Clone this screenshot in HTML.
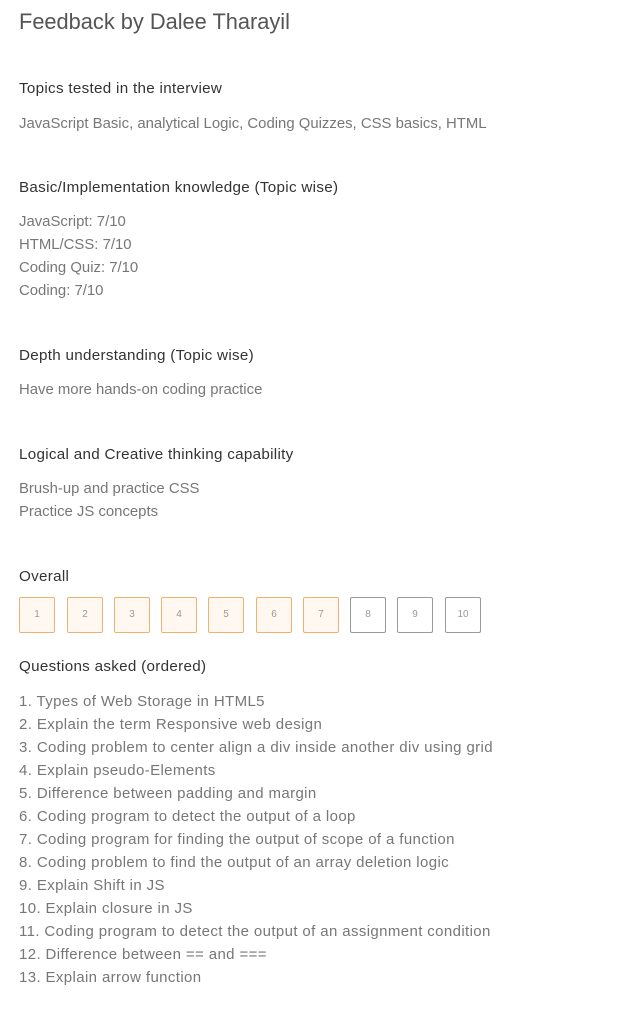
<!DOCTYPE html>
<html><head><meta charset="utf-8"><style>
body{margin:0;width:628px;height:1027px;background:#fff;font-family:"Liberation Sans",sans-serif;position:relative;overflow:hidden}
div{position:absolute;left:19px;white-space:nowrap}
.t{font-size:21.8px;color:#555;top:9px}
.h{font-size:15.2px;color:#333;letter-spacing:0.3px}
.v{font-size:14.9px;color:#777;line-height:23px}
.q{font-size:15px;letter-spacing:0.38px}
.b{width:34px;height:34px;border:1px solid #999;border-radius:2px;font-size:10px;color:#999;text-align:center;line-height:34px;top:597px}
.o{border-color:#f0b070;background:#fff8f0}
</style></head><body>
<div class="t">Feedback by Dalee Tharayil</div>
<div class="h" style="top:80px">Topics tested in the interview</div>
<div class="v" style="top:113px">JavaScript Basic, analytical Logic, Coding Quizzes, CSS basics, HTML</div>
<div class="h" style="top:179px">Basic/Implementation knowledge (Topic wise)</div>
<div class="v" style="top:211px">JavaScript: 7/10<br>HTML/CSS: 7/10<br>Coding Quiz: 7/10<br>Coding: 7/10</div>
<div class="h" style="top:347px">Depth understanding (Topic wise)</div>
<div class="v" style="top:379px">Have more hands-on coding practice</div>
<div class="h" style="top:446px">Logical and Creative thinking capability</div>
<div class="v" style="top:478px">Brush-up and practice CSS<br>Practice JS concepts</div>
<div class="h" style="top:568px">Overall</div>
<div class="b o" style="left:19px">1</div>
<div class="b o" style="left:67px">2</div>
<div class="b o" style="left:114px">3</div>
<div class="b o" style="left:161px">4</div>
<div class="b o" style="left:208px">5</div>
<div class="b o" style="left:256px">6</div>
<div class="b o" style="left:303px">7</div>
<div class="b" style="left:350px">8</div>
<div class="b" style="left:397px">9</div>
<div class="b" style="left:445px">10</div>
<div class="h" style="top:658px">Questions asked (ordered)</div>
<div class="v q" style="top:690px">1. Types of Web Storage in HTML5<br>2. Explain the term Responsive web design<br>3. Coding problem to center align a div inside another div using grid<br>4. Explain pseudo-Elements<br>5. Difference between padding and margin<br>6. Coding program to detect the output of a loop<br>7. Coding program for finding the output of scope of a function<br>8. Coding problem to find the output of an array deletion logic<br>9. Explain Shift in JS<br>10. Explain closure in JS<br>11. Coding program to detect the output of an assignment condition<br>12. Difference between == and ===<br>13. Explain arrow function</div>
</body></html>
